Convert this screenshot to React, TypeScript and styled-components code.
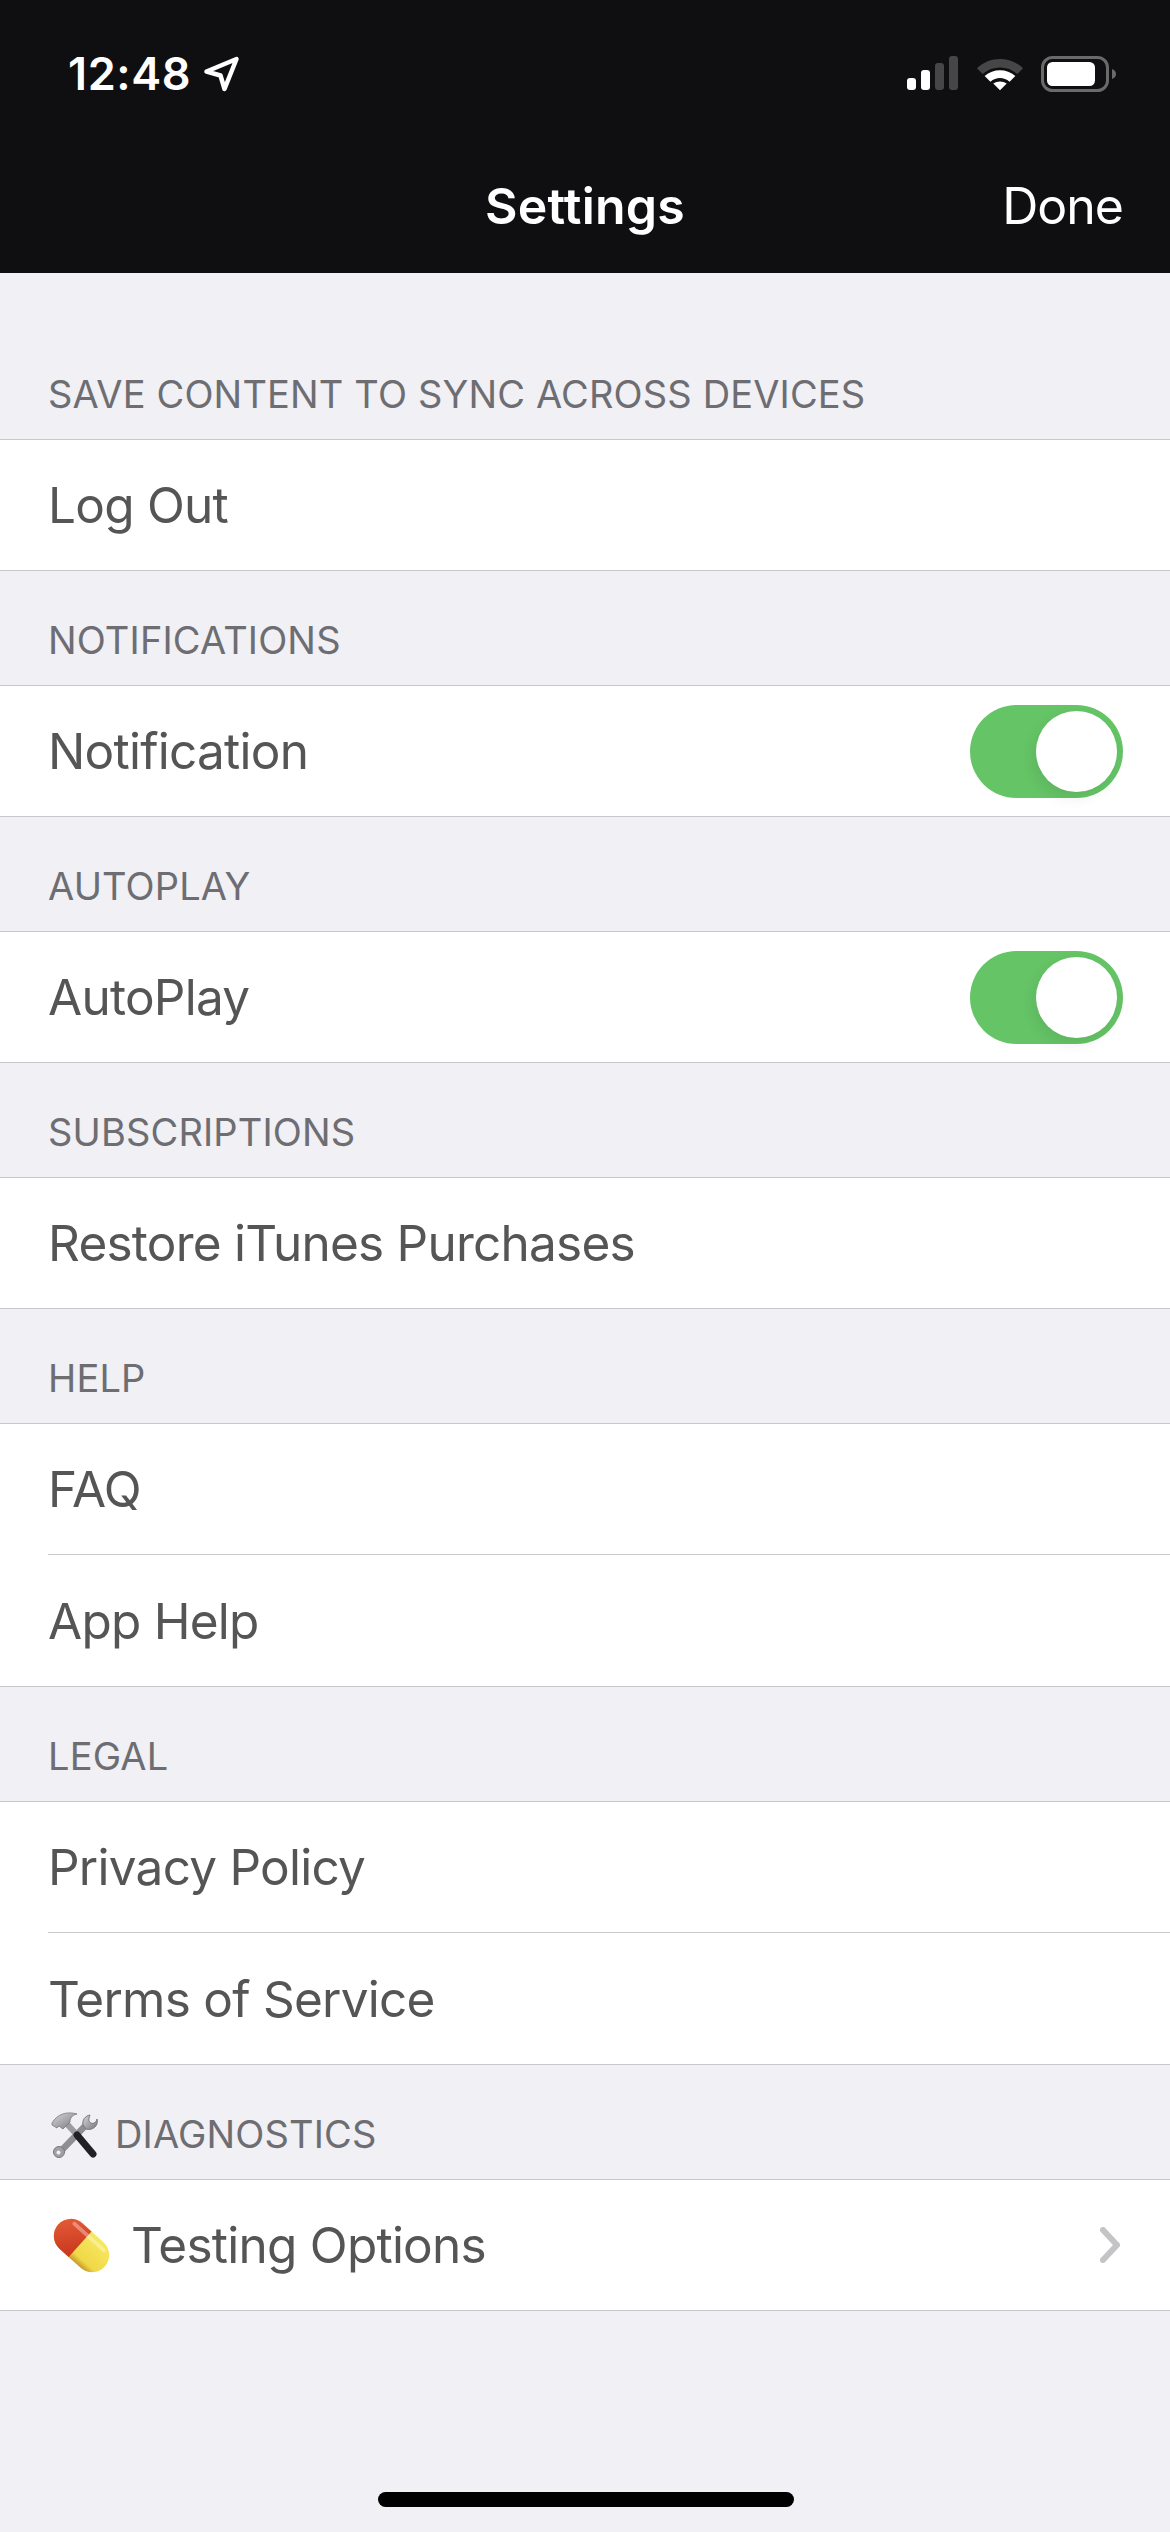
import React from "react";
import styled, { createGlobalStyle } from "styled-components";

const Global = createGlobalStyle`
  html, body { margin: 0; padding: 0; background: #f0f0f5; }
  body { font-family: Inter, "Noto Sans", "Liberation Sans", sans-serif; -webkit-font-smoothing: antialiased; }
`;

const Screen = styled.div`
  position: relative;
  width: 1170px;
  height: 2532px;
  background: #f0f0f5;
  overflow: hidden;
`;

const Header = styled.header`
  height: 273px;
  background: #0f0e10;
  color: #fff;
  display: flex;
  flex-direction: column;
`;

const StatusBar = styled.div`
  height: 147px;
  display: flex;
  align-items: center;
  justify-content: space-between;
  padding: 0 53px 0 68px;
`;

const Clock = styled.div`
  display: flex;
  align-items: center;
  gap: 12px;
  font-size: 45px;
  font-weight: 600;
  letter-spacing: 0.6px;
`;

const StatusIcons = styled.div`
  display: flex;
  align-items: center;
  gap: 17px;
`;

const NavBar = styled.div`
  position: relative;
  height: 126px;
  display: flex;
  align-items: center;
  justify-content: center;
  padding-bottom: 8px;
  box-sizing: border-box;
`;

const NavTitle = styled.div`
  font-size: 50px;
  font-weight: 600;
  letter-spacing: 0.2px;
`;

const DoneButton = styled.div`
  position: absolute;
  right: 47px;
  font-size: 50px;
  font-weight: 400;
  letter-spacing: -1px;
`;

const Content = styled.main`
  display: flex;
  flex-direction: column;
  padding-top: 52px;
`;

const SectionLabel = styled.div`
  height: 114px;
  box-sizing: border-box;
  padding: 0 48px 22px;
  display: flex;
  align-items: flex-end;
  gap: 16px;
  font-size: 38px;
  line-height: 46px;
  letter-spacing: 0.15px;
  color: #6d6d72;
`;

const Group = styled.div`
  background: #fff;
  border-top: 1px solid #c8c7cc;
  border-bottom: 1px solid #c8c7cc;
`;

const Row = styled.div`
  height: 130px;
  display: flex;
  align-items: center;
  padding: 0 47px 0 48px;
  gap: 21px;
  font-size: 49.5px;
  letter-spacing: -0.75px;
  color: #555;
`;

const RowDivider = styled.div`
  height: 1px;
  margin: 0 0 1px 48px;
  background: #c8c7cc;
`;

const RowLabel = styled.span`
  flex: 1;
`;

const Toggle = styled.div`
  position: relative;
  width: 153px;
  height: 93px;
  border-radius: 47px;
  background: #65c466;
  &::after {
    content: "";
    position: absolute;
    top: 6px;
    right: 6px;
    width: 81px;
    height: 81px;
    border-radius: 50%;
    background: #fff;
    box-shadow: -3px 6px 14px rgba(0, 0, 0, 0.08);
  }
`;

const HomeBar = styled.div`
  position: absolute;
  left: 378px;
  top: 2492px;
  width: 416px;
  height: 15px;
  border-radius: 8px;
  background: #000;
`;

const ToolsSvg = styled.svg`
  margin: 0 0 -2px 3px;
  flex: none;
`;

const PillSvg = styled.svg`
  margin-left: 5px;
  flex: none;
`;

const ChevronSvg = styled.svg`
  margin-right: 3px;
  flex: none;
`;

const LocationArrow = () => (
  <svg width="37" height="36" viewBox="0 0 37 36" fill="none">
    <path d="M3.5 15.5 L33.5 3 L21.5 33 L17.5 19.5 Z" stroke="#fff" strokeWidth="4.5" strokeLinejoin="round" />
  </svg>
);

const Cellular = () => (
  <svg width="52" height="35" viewBox="0 0 52 35">
    <rect x="0" y="22" width="9" height="12" rx="3" fill="#fff" />
    <rect x="14" y="14" width="9" height="20" rx="3" fill="#fff" />
    <rect x="28" y="7" width="9" height="27" rx="3" fill="#464646" />
    <rect x="42" y="0" width="9" height="34" rx="3" fill="#464646" />
  </svg>
);

const Wifi = () => (
  <svg width="48" height="36" viewBox="0 0 50 36">
    <path d="M1 12 C14 -1 36 -1 49 12 L43 18 C33 9 17 9 7 18 Z" fill="#464646" />
    <path d="M9 20 C18 12 32 12 41 20 L35 26 C29 21 21 21 15 26 Z" fill="#fff" />
    <path d="M18 28 C22 25 28 25 32 28 L25 35 Z" fill="#fff" />
  </svg>
);

const Battery = () => (
  <svg width="76" height="36" viewBox="0 0 76 36">
    <rect x="1.5" y="1.5" width="65" height="33" rx="10" fill="none" stroke="#6a6a6a" strokeWidth="3" />
    <rect x="6" y="6" width="48" height="24" rx="5.5" fill="#fff" />
    <path d="M71 13 C74 14 75 16 75 18 C75 20 74 22 71 23 Z" fill="#6a6a6a" />
  </svg>
);

const Tools = () => (
  <ToolsSvg width="48" height="48" viewBox="0 0 48 48" fill="none">
    <defs>
      <linearGradient id="steel" x1="0" y1="0" x2="1" y2="1">
        <stop offset="0" stopColor="#d6d6da" />
        <stop offset="1" stopColor="#77777d" />
      </linearGradient>
    </defs>
    <path d="M9 41 L34 15" stroke="#8e8e94" strokeWidth="6.5" strokeLinecap="round" />
    <path d="M46 8 C45 12 42 13 40 12 C38 11 37 9 39 4 C34 5 31 9 32 14 L35 18 C41 20 48 15 46 8 Z" fill="url(#steel)" stroke="#77777c" strokeWidth="1" />
    <circle cx="8" cy="41" r="5.5" fill="#a0a0a6" stroke="#77777c" strokeWidth="1" />
    <circle cx="7.5" cy="41.5" r="2" fill="#f0f0f5" />
    <path d="M16 13 L27 25" stroke="#9c9ca2" strokeWidth="6" />
    <path d="M26 24 L42 43" stroke="#222224" strokeWidth="7" strokeLinecap="round" />
    <path d="M1 12 C6 3 16 0 26 3 C21 4 19 7 19 11 L12 18 L8 15 L6 17 L1 14 Z" fill="url(#steel)" stroke="#77777c" strokeWidth="0.8" />
  </ToolsSvg>
);

const Pill = () => (
  <PillSvg width="57" height="57" viewBox="0 0 60 60">
    <defs>
      <linearGradient id="pillRed" x1="0" y1="0" x2="1" y2="1">
        <stop offset="0" stopColor="#e8603c" />
        <stop offset="1" stopColor="#c8361c" />
      </linearGradient>
      <linearGradient id="pillYellow" x1="0" y1="0" x2="0" y2="1">
        <stop offset="0" stopColor="#f7e860" />
        <stop offset="0.8" stopColor="#f0d848" />
        <stop offset="1" stopColor="#c49a24" />
      </linearGradient>
    </defs>
    <g transform="rotate(42 30 30)">
      <rect x="-3" y="12" width="66" height="36" rx="18" fill="url(#pillYellow)" />
      <path d="M28 12 H15 A18 18 0 0 0 15 48 H28 Z" fill="url(#pillRed)" />
      <rect x="7" y="16" width="46" height="4" rx="2" fill="#fff" opacity="0.35" />
    </g>
  </PillSvg>
);

const Chevron = () => (
  <ChevronSvg width="20" height="36" viewBox="0 0 20 36" fill="none">
    <path d="M3 3 L17 18 L3 33" stroke="#c4c4c7" strokeWidth="6" strokeLinecap="round" strokeLinejoin="round" />
  </ChevronSvg>
);

type Item = { label: string; toggle?: boolean; icon?: boolean; chevron?: boolean };
type Section = { title: string; icon?: boolean; items: Item[] };

const sections: Section[] = [
  { title: "SAVE CONTENT TO SYNC ACROSS DEVICES", items: [{ label: "Log Out" }] },
  { title: "NOTIFICATIONS", items: [{ label: "Notification", toggle: true }] },
  { title: "AUTOPLAY", items: [{ label: "AutoPlay", toggle: true }] },
  { title: "SUBSCRIPTIONS", items: [{ label: "Restore iTunes Purchases" }] },
  { title: "HELP", items: [{ label: "FAQ" }, { label: "App Help" }] },
  { title: "LEGAL", items: [{ label: "Privacy Policy" }, { label: "Terms of Service" }] },
  { title: "DIAGNOSTICS", icon: true, items: [{ label: "Testing Options", icon: true, chevron: true }] },
];

export default function App() {
  return (
    <Screen>
      <Global />
      <Header>
        <StatusBar>
          <Clock>
            12:48
            <LocationArrow />
          </Clock>
          <StatusIcons>
            <Cellular />
            <Wifi />
            <Battery />
          </StatusIcons>
        </StatusBar>
        <NavBar>
          <NavTitle>Settings</NavTitle>
          <DoneButton>Done</DoneButton>
        </NavBar>
      </Header>
      <Content>
        {sections.map((s) => (
          <React.Fragment key={s.title}>
            <SectionLabel>
              {s.icon && <Tools />}
              {s.title}
            </SectionLabel>
            <Group>
              {s.items.map((it, i) => (
                <React.Fragment key={it.label}>
                  {i > 0 && <RowDivider />}
                  <Row>
                    {it.icon && <Pill />}
                    <RowLabel>{it.label}</RowLabel>
                    {it.toggle && <Toggle />}
                    {it.chevron && <Chevron />}
                  </Row>
                </React.Fragment>
              ))}
            </Group>
          </React.Fragment>
        ))}
      </Content>
      <HomeBar />
    </Screen>
  );
}
